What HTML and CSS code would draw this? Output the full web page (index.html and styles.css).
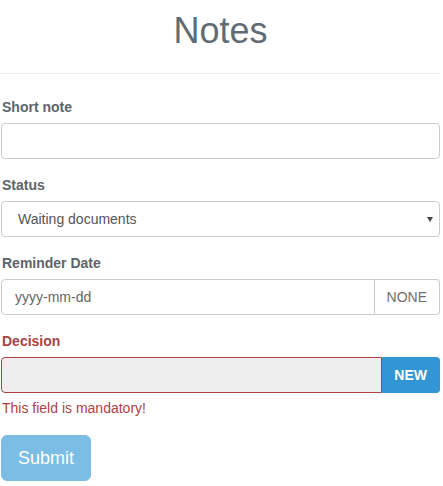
FILE: index.html
```html
<!DOCTYPE html>
<html lang="en">
<head>
<meta charset="utf-8">
<title>Notes</title>
<link rel="stylesheet" href="styles.css">
</head>
<body>
<div class="page">
  <header class="page-header">
    <h1 class="title">Notes</h1>
  </header>
  <form class="form">
    <div class="group">
      <label class="label">Short note</label>
      <input class="control" type="text">
    </div>
    <div class="group">
      <label class="label">Status</label>
      <div class="select-wrap">
        <select class="control select">
          <option>Waiting documents</option>
        </select>
      </div>
    </div>
    <div class="group">
      <label class="label">Reminder Date</label>
      <div class="input-group">
        <input class="control control-grow" type="text" placeholder="yyyy-mm-dd">
        <span class="addon">NONE</span>
      </div>
    </div>
    <div class="group group-error">
      <label class="label label-error">Decision</label>
      <div class="input-group">
        <input class="control control-grow control-error" type="text" readonly>
        <button class="btn-new" type="button">NEW</button>
      </div>
      <span class="help">This field is mandatory!</span>
    </div>
    <button class="btn-submit" type="button" disabled>Submit</button>
  </form>
</div>
</body>
</html>
```

FILE: styles.css
```css
* {
  box-sizing: border-box;
}

html, body {
  margin: 0;
  padding: 0;
  background: #fff;
}

body {
  font-family: "Liberation Sans", Arial, Helvetica, sans-serif;
  font-size: 14px;
  line-height: 20px;
  color: #555;
}

.page {
  width: 443px;
  padding: 0 3px 0 1px;
}

.page-header {
  padding-bottom: 22px;
  border-bottom: 1px solid #eee;
}

.title {
  margin: 11px 0 0;
  font-size: 36px;
  line-height: 40px;
  font-weight: normal;
  text-align: center;
  color: #616b74;
}

.form {
  padding-top: 23px;
  display: flex;
  flex-direction: column;
  align-items: flex-start;
}

.group {
  width: 100%;
  display: flex;
  flex-direction: column;
  margin-bottom: 16px;
}

.group-error {
  margin-bottom: 17px;
}

.label {
  display: block;
  font-weight: bold;
  font-size: 14px;
  line-height: 20px;
  margin-bottom: 6px;
  padding-left: 1px;
  color: #5b656e;
}

.label-error {
  color: #a94442;
}

.control {
  display: block;
  width: 100%;
  height: 36px;
  margin: 0;
  padding: 0 13px;
  font-family: inherit;
  font-size: 14px;
  line-height: 20px;
  color: #555;
  background: #fff;
  border: 1px solid #ccc;
  border-radius: 4px;
  outline: none;
}

.control::placeholder {
  color: #666;
  opacity: 1;
}

.select-wrap {
  position: relative;
  width: 100%;
}

.select-wrap::after {
  content: "";
  position: absolute;
  right: 7px;
  top: 16px;
  width: 0;
  height: 0;
  border-top: 5px solid #444;
  border-left: 3px solid transparent;
  border-right: 3px solid transparent;
  pointer-events: none;
}

.select {
  -webkit-appearance: none;
  appearance: none;
  padding-left: 16px;
}

.input-group {
  display: flex;
  width: 100%;
}

.control-grow {
  flex: 1;
  width: auto;
  min-width: 0;
  border-top-right-radius: 0;
  border-bottom-right-radius: 0;
}

.addon {
  display: flex;
  align-items: center;
  height: 36px;
  padding: 0 12px;
  border: 1px solid #ccc;
  border-left: 0;
  border-radius: 0 4px 4px 0;
  background: #fff;
  color: #6f6f6f;
  font-size: 14px;
}

.control-error {
  background: #eee;
  border-color: #a94442;
}

.btn-new {
  height: 36px;
  margin: 0;
  padding: 0 12px;
  border: 1px solid #3196d3;
  border-left: 0;
  border-radius: 0 4px 4px 0;
  background: #3196d3;
  color: #fff;
  font-family: inherit;
  font-weight: bold;
  font-size: 14px;
  line-height: 20px;
}

.help {
  display: block;
  margin-top: 5px;
  padding-left: 1px;
  font-size: 14px;
  line-height: 20px;
  color: #a94442;
}

.btn-submit {
  margin: 0;
  padding: 10px 16px;
  font-family: inherit;
  font-size: 18px;
  line-height: 24px;
  color: #fff;
  background: #7cbde6;
  border: 1px solid #7cbde6;
  border-radius: 6px;
}
```
